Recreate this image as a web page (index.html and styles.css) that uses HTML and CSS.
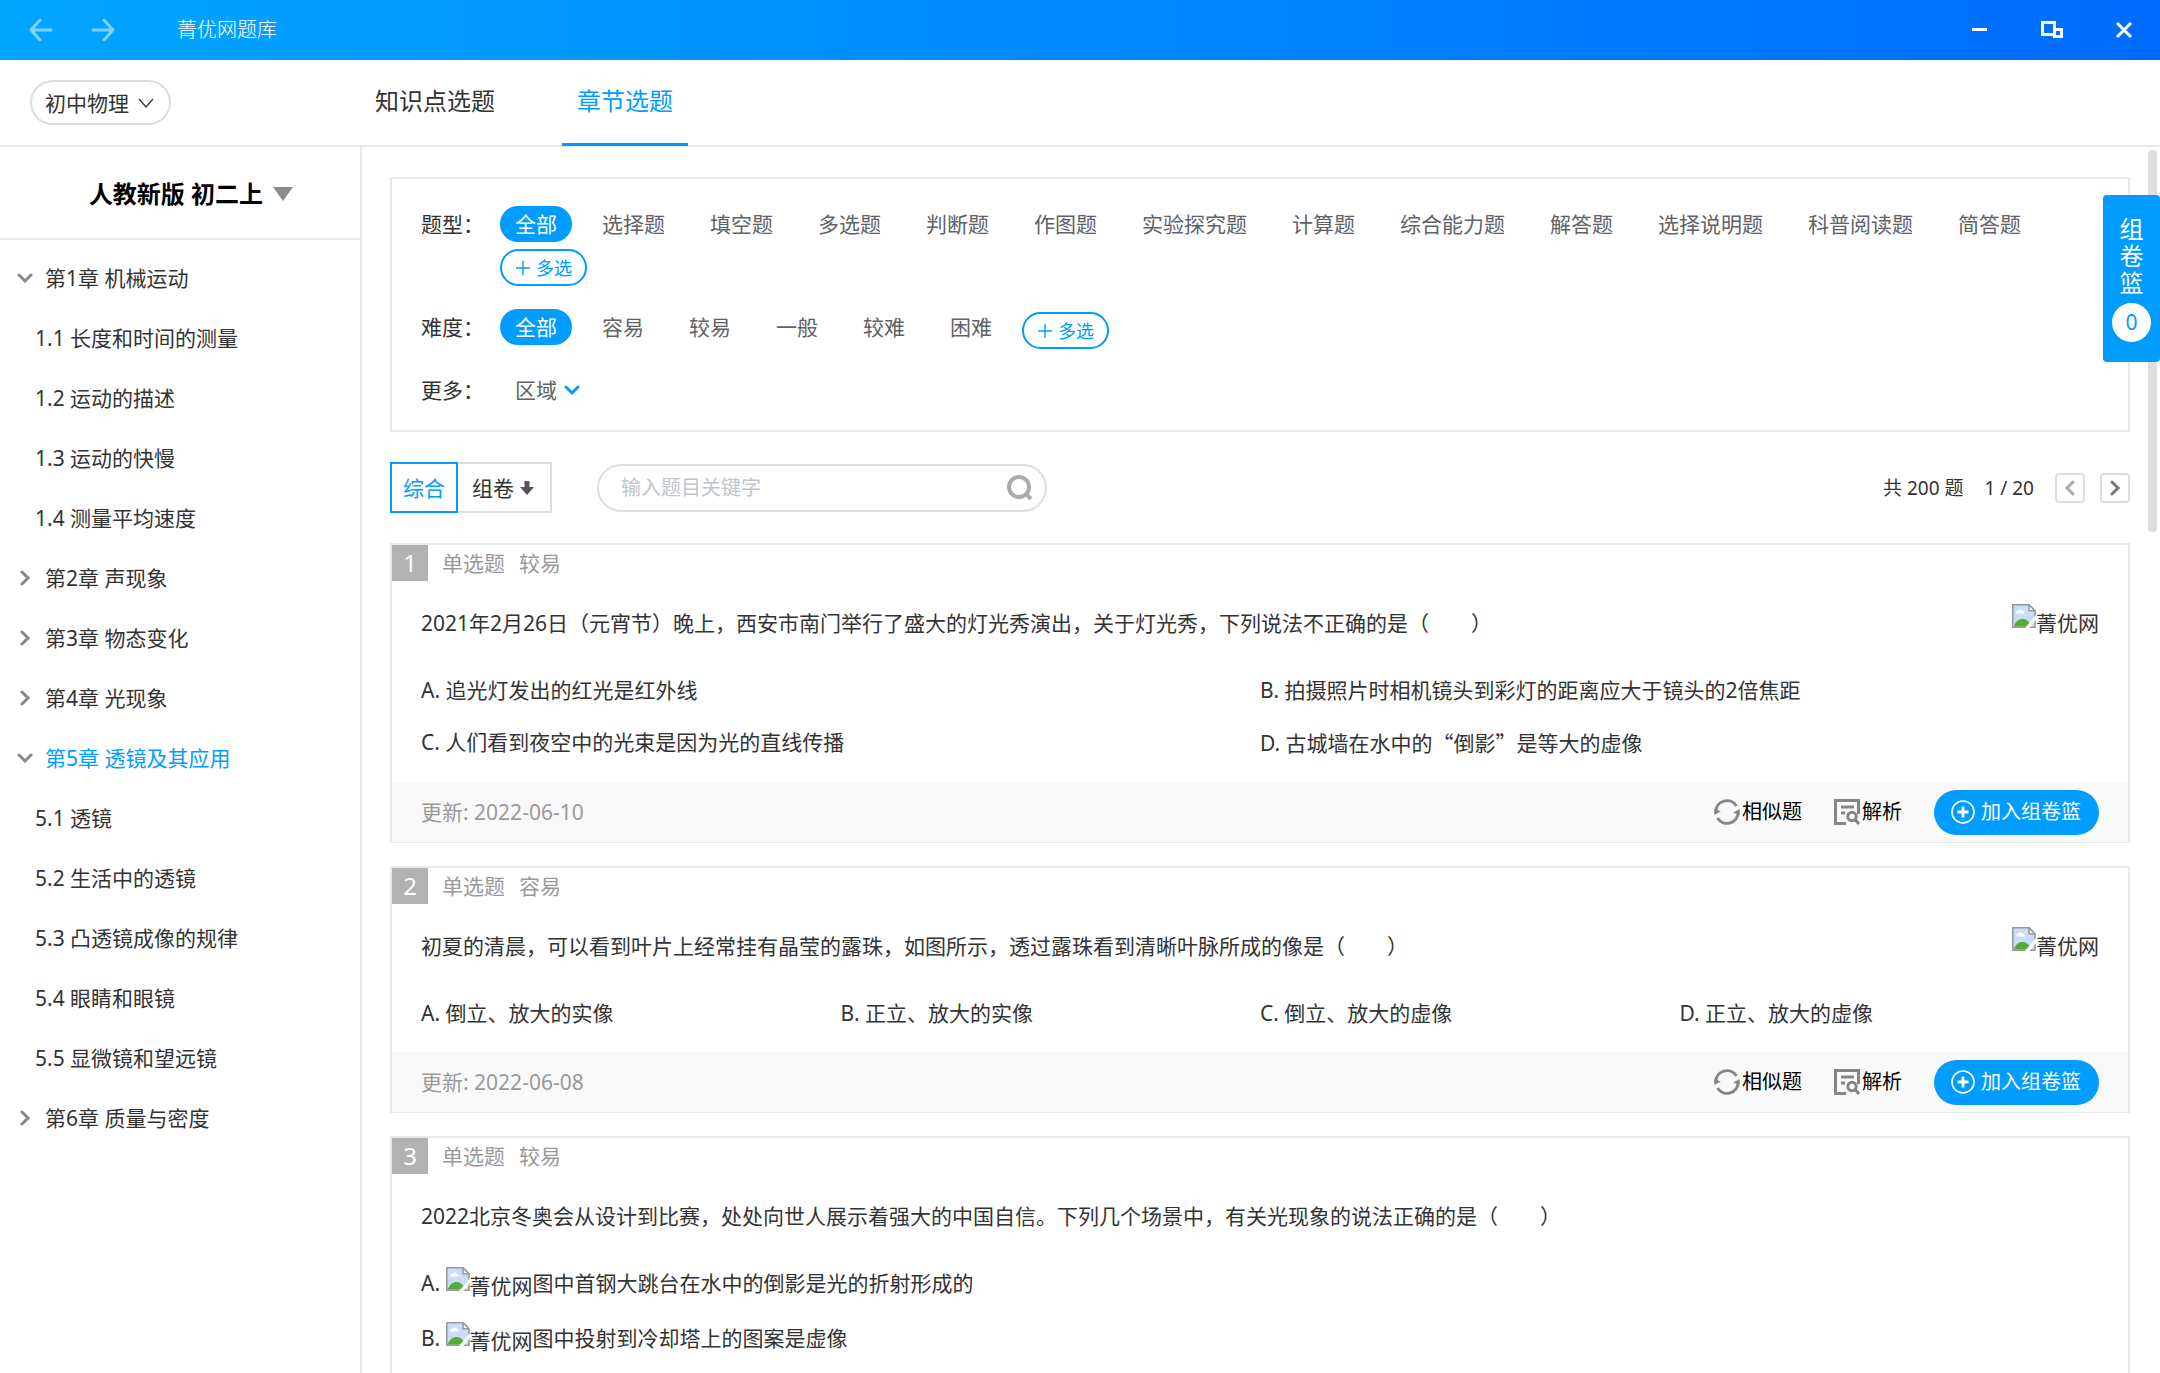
FILE: index.html
```
<!DOCTYPE html>
<html lang="zh-CN">
<head>
  <meta charset="UTF-8" />
  <meta name="viewport" content="width=device-width, initial-scale=1.0"/>
  <title>菁优网题库</title>
  <link rel="stylesheet" href="styles.css">
</head>
<body>
  <!-- shared icons -->
  <svg class="sprite" aria-hidden="true">
    <symbol id="i-down" viewBox="0 0 16 16"><path d="M2 5l6 6 6-6" fill="none" stroke="currentColor" stroke-width="3" stroke-linecap="round"/></symbol>
    <symbol id="i-right" viewBox="0 0 16 16"><path d="M5 2l6 6-6 6" fill="none" stroke="currentColor" stroke-width="3" stroke-linecap="round"/></symbol>
    <symbol id="i-left" viewBox="0 0 16 16"><path d="M11 2L5 8l6 6" fill="none" stroke="currentColor" stroke-width="3" stroke-linecap="round"/></symbol>
    <symbol id="i-plus" viewBox="0 0 16 16"><path d="M8 1v14M1 8h14" fill="none" stroke="currentColor" stroke-width="1.4"/></symbol>
    <symbol id="i-similar" viewBox="0 0 26 26">
      <path d="M1.800 13A11.200 11.200 0 0 1 22.500 7M24.200 13A11.200 11.200 0 0 1 3.500 19" fill="none" stroke="currentColor" stroke-width="3"/>
      <path d="M.3 16V10l6.500 2.500zM25.700 10v6l-6.500-2.500z" fill="currentColor"/>
    </symbol>
    <symbol id="i-analysis" viewBox="0 0 26 26">
      <path d="M12 24.500H1.500v-23h23V15M7 8h13M7 14h4" fill="none" stroke="currentColor" stroke-width="3"/>
      <circle cx="18" cy="17.500" r="4.200" fill="none" stroke="currentColor" stroke-width="3"/>
      <path d="M21 20.500l4 4.500" stroke="currentColor" stroke-width="3"/>
    </symbol>
    <symbol id="i-add" viewBox="0 0 24 24">
      <circle cx="12" cy="12" r="11" fill="none" stroke="currentColor" stroke-width="1.600"/>
      <path d="M12 6.500v11M6.500 12h11" stroke="currentColor" stroke-width="2.800"/>
    </symbol>
    <symbol id="i-broken" viewBox="0 0 24 24">
      <path d="M.8.8H17l6 6v16.400H.8z" fill="#c9dcf8" stroke="#9a9a9a" stroke-width="1.600"/>
      <path d="M4 9.500a2.500 2.500 0 0 1 2.500-3 2.800 2.800 0 0 1 4.500.5 1.800 1.800 0 0 1 1.500 2.500z" fill="#fff"/>
      <path d="M1.600 22.400c2-5 5.500-7.400 8.600-7.400 4 0 7.500 2.600 9 7.400z" fill="#55ac35"/>
      <path d="M17 .8v6h6z" fill="#fff" stroke="#9a9a9a" stroke-width="1.600"/>
      <path d="M24 11v5L17.500 24H13z" fill="#fff"/>
    </symbol>
  </svg>

  <header class="titlebar">
    <button class="nav-btn" aria-label="后退"><svg viewBox="0 0 24 22"><path d="M22 11H2M11 1L2 11l9 10"/></svg></button>
    <button class="nav-btn" aria-label="前进"><svg viewBox="0 0 24 22"><path d="M2 11h20M13 1l9 10-9 10"/></svg></button>
    <span class="app-name">菁优网题库</span>
    <div class="win-btns">
      <button aria-label="最小化"><svg viewBox="0 0 24 24"><path d="M4 11.500h15"/></svg></button>
      <button aria-label="还原"><svg viewBox="0 0 24 24"><path d="M2.500 4.500h12v12h-12zM14.500 11.500h7v7h-7z"/></svg></button>
      <button aria-label="关闭"><svg viewBox="0 0 24 24"><path d="M5 5l14 14M19 5L5 19"/></svg></button>
    </div>
  </header>

  <div class="topbar">
    <div class="subject-wrap">
      <button class="subject">初中物理<svg viewBox="0 0 16 12"><path d="M1 2l7 8 7-8" fill="none" stroke="currentColor" stroke-width="1.300"/></svg></button>
    </div>
    <nav class="tabs">
      <a href="#">知识点选题</a>
      <a href="#" class="active">章节选题</a>
    </nav>
  </div>

  <div class="layout">
    <aside class="sidebar">
      <button class="book">人教新版 初二上<svg viewBox="0 0 20 14"><path d="M0 0h20L10 14z" fill="#8c8c8c"/></svg></button>
      <ul class="tree">
        <li><a href="#" class="chapter"><svg><use href="#i-down"/></svg>第1章 机械运动</a>
          <ul>
            <li><a href="#">1.1 长度和时间的测量</a></li>
            <li><a href="#">1.2 运动的描述</a></li>
            <li><a href="#">1.3 运动的快慢</a></li>
            <li><a href="#">1.4 测量平均速度</a></li>
          </ul>
        </li>
        <li><a href="#" class="chapter"><svg><use href="#i-right"/></svg>第2章 声现象</a></li>
        <li><a href="#" class="chapter"><svg><use href="#i-right"/></svg>第3章 物态变化</a></li>
        <li><a href="#" class="chapter"><svg><use href="#i-right"/></svg>第4章 光现象</a></li>
        <li><a href="#" class="chapter current"><svg><use href="#i-down"/></svg>第5章 透镜及其应用</a>
          <ul>
            <li><a href="#">5.1 透镜</a></li>
            <li><a href="#">5.2 生活中的透镜</a></li>
            <li><a href="#">5.3 凸透镜成像的规律</a></li>
            <li><a href="#">5.4 眼睛和眼镜</a></li>
            <li><a href="#">5.5 显微镜和望远镜</a></li>
          </ul>
        </li>
        <li><a href="#" class="chapter"><svg><use href="#i-right"/></svg>第6章 质量与密度</a></li>
      </ul>
    </aside>

    <main class="content">
      <section class="filters">
        <div class="filter-row">
          <span class="filter-label">题型：</span>
          <div class="filter-items">
            <button class="item on">全部</button>
            <button class="item">选择题</button>
            <button class="item">填空题</button>
            <button class="item">多选题</button>
            <button class="item">判断题</button>
            <button class="item">作图题</button>
            <button class="item">实验探究题</button>
            <button class="item">计算题</button>
            <button class="item">综合能力题</button>
            <button class="item">解答题</button>
            <button class="item">选择说明题</button>
            <button class="item">科普阅读题</button>
            <button class="item">简答题</button>
            <button class="multi"><svg><use href="#i-plus"/></svg>多选</button>
          </div>
        </div>
        <div class="filter-row">
          <span class="filter-label">难度：</span>
          <div class="filter-items">
            <button class="item on">全部</button>
            <button class="item">容易</button>
            <button class="item">较易</button>
            <button class="item">一般</button>
            <button class="item">较难</button>
            <button class="item">困难</button>
            <button class="multi"><svg><use href="#i-plus"/></svg>多选</button>
          </div>
        </div>
        <div class="filter-row">
          <span class="filter-label">更多：</span>
          <div class="filter-items">
            <button class="item area">区域<svg><use href="#i-down"/></svg></button>
          </div>
        </div>
      </section>

      <div class="toolbar">
        <div class="sort">
          <button class="on">综合</button>
          <button>组卷<svg viewBox="0 0 14 14"><path d="M4.500 0h5v6H14l-7 8-7-8h4.500z" fill="currentColor"/></svg></button>
        </div>
        <label class="search">
          <input type="text" placeholder="输入题目关键字" aria-label="搜索题目">
          <svg viewBox="0 0 26 26"><circle cx="12" cy="12" r="10"/><path d="M19 19l5 5"/></svg>
        </label>
        <div class="pager">
          <span>共 200 题</span>
          <span>1 / 20</span>
          <button aria-label="上一页" disabled><svg><use href="#i-left"/></svg></button>
          <button aria-label="下一页"><svg><use href="#i-right"/></svg></button>
        </div>
      </div>

      <article class="card">
        <div class="card-head"><span class="num">1</span><span>单选题</span><span>较易</span></div>
        <div class="card-body">
          <div class="question">
            <p>2021年2月26日（元宵节）晚上，西安市南门举行了盛大的灯光秀演出，关于灯光秀，下列说法不正确的是（　　）</p>
            <span class="broken"><svg><use href="#i-broken"/></svg><span>菁优网</span></span>
          </div>
          <ul class="options cols-2">
            <li>A. 追光灯发出的红光是红外线</li>
            <li>B. 拍摄照片时相机镜头到彩灯的距离应大于镜头的2倍焦距</li>
            <li>C. 人们看到夜空中的光束是因为光的直线传播</li>
            <li>D. 古城墙在水中的<span class="quoted">“倒影”</span>是等大的虚像</li>
          </ul>
        </div>
        <footer class="card-foot">
          <span class="date">更新: 2022-06-10</span>
          <a href="#"><svg><use href="#i-similar"/></svg>相似题</a>
          <a href="#"><svg><use href="#i-analysis"/></svg>解析</a>
          <button class="add"><svg><use href="#i-add"/></svg>加入组卷篮</button>
        </footer>
      </article>

      <article class="card">
        <div class="card-head"><span class="num">2</span><span>单选题</span><span>容易</span></div>
        <div class="card-body">
          <div class="question">
            <p>初夏的清晨，可以看到叶片上经常挂有晶莹的露珠，如图所示，透过露珠看到清晰叶脉所成的像是（　　）</p>
            <span class="broken"><svg><use href="#i-broken"/></svg><span>菁优网</span></span>
          </div>
          <ul class="options cols-4">
            <li>A. 倒立、放大的实像</li>
            <li>B. 正立、放大的实像</li>
            <li>C. 倒立、放大的虚像</li>
            <li>D. 正立、放大的虚像</li>
          </ul>
        </div>
        <footer class="card-foot">
          <span class="date">更新: 2022-06-08</span>
          <a href="#"><svg><use href="#i-similar"/></svg>相似题</a>
          <a href="#"><svg><use href="#i-analysis"/></svg>解析</a>
          <button class="add"><svg><use href="#i-add"/></svg>加入组卷篮</button>
        </footer>
      </article>

      <article class="card">
        <div class="card-head"><span class="num">3</span><span>单选题</span><span>较易</span></div>
        <div class="card-body">
          <div class="question">
            <p>2022北京冬奥会从设计到比赛，处处向世人展示着强大的中国自信。下列几个场景中，有关光现象的说法正确的是（　　）</p>
          </div>
          <ul class="options">
            <li>A. <span class="broken"><svg><use href="#i-broken"/></svg><span>菁优网</span></span>图中首钢大跳台在水中的倒影是光的折射形成的</li>
            <li>B. <span class="broken"><svg><use href="#i-broken"/></svg><span>菁优网</span></span>图中投射到冷却塔上的图案是虚像</li>
          </ul>
        </div>
      </article>
    </main>
    <div class="scroll-thumb"></div>
    <button class="basket">组卷篮<span>0</span></button>
  </div>
</body>
</html>
```
FILE: styles.css
```
* {
  box-sizing: border-box;
}

body {
  margin: 0;
  height: 100vh;
  display: flex;
  flex-direction: column;
  overflow: hidden;
  background: #fff;
  color: #333;
  font-family: "Noto Sans", "Noto Sans CJK SC", sans-serif;
  font-size: 21px;
  line-height: 32px;
}

button {
  font: inherit;
  color: inherit;
  background: none;
  border: none;
  padding: 0;
  cursor: pointer;
}

a {
  color: inherit;
  text-decoration: none;
}

ul {
  list-style: none;
  margin: 0;
  padding: 0;
}

p {
  margin: 0;
}

svg {
  flex: none;
  width: 16px;
  height: 16px;
}

.sprite {
  position: absolute;
  width: 0;
  height: 0;
}

/* title bar */
.titlebar {
  flex: none;
  display: flex;
  align-items: center;
  height: 60px;
  padding: 0 24px 0 29px;
  background: linear-gradient(90deg, #01a6ff, #006cff);
  color: #fff;
  font-size: 20px;
  font-weight: 300;
}

.nav-btn {
  display: flex;
  margin-right: 38px;
}

.nav-btn svg {
  width: 24px;
  height: 22px;
  fill: none;
  stroke: #fff;
  stroke-width: 3;
  stroke-linecap: round;
  opacity: .5;
}

.app-name {
  margin-left: 24px;
}

.win-btns {
  display: flex;
  gap: 48px;
  margin-left: auto;
}

.win-btns button {
  display: flex;
}

.win-btns svg {
  width: 24px;
  height: 24px;
  fill: none;
  stroke: #fff;
  stroke-width: 3;
}

/* subject and tabs */
.topbar {
  flex: none;
  display: flex;
  height: 87px;
  border-bottom: 2px solid #e9e9e9;
}

.subject-wrap {
  width: 360px;
  padding: 20px 30px;
}

.subject {
  display: flex;
  align-items: center;
  gap: 9px;
  height: 45px;
  padding: 0 15px 0 13px;
  border: 2px solid #ddd;
  border-radius: 23px;
  line-height: 30px;
}

.tabs {
  display: flex;
  gap: 52px;
  font-size: 24px;
}

.tabs a {
  height: 86px;
  padding: 0 15px;
  line-height: 82px;
}

.tabs .active {
  color: #009dff;
  border-bottom: 3px solid #009dff;
}

.layout {
  position: relative;
  flex: 1;
  display: flex;
  min-height: 0;
}

/* chapter tree */
.sidebar {
  flex: none;
  width: 362px;
  border-right: 2px solid #e9e9e9;
}

.book {
  display: flex;
  align-items: center;
  justify-content: center;
  gap: 10px;
  width: 100%;
  height: 93px;
  padding: 2px 0 0 22px;
  border-bottom: 2px solid #e9e9e9;
  color: #000;
  font-size: 24px;
  font-weight: 700;
}

.book svg {
  width: 20px;
  height: 14px;
}

.tree {
  padding-top: 8px;
}

.tree a {
  display: flex;
  align-items: center;
  height: 60px;
  padding-left: 35px;
}

.tree .chapter {
  gap: 12px;
  padding-left: 17px;
}

.tree .chapter svg {
  color: #888;
}

.tree .current {
  color: #009dff;
}

/* right side */
.content {
  flex: 1;
  min-width: 0;
  padding: 30px 30px 0 28px;
  overflow: hidden;
}

.filters {
  padding: 27px 29px 22px;
  border: 2px solid #e9e9e9;
}

.filter-row {
  display: flex;
  margin-bottom: 23px;
}

.filter-row:last-child {
  margin-bottom: 0;
}

.filter-label {
  flex: none;
  width: 79px;
  line-height: 36px;
}

.filter-items {
  display: flex;
  flex-wrap: wrap;
  gap: 4px 15px;
}

.item {
  height: 36px;
  padding: 0 15px;
  border-radius: 18px;
  color: #606266;
}

.item.on {
  background: #009dff;
  color: #fff;
}

.item.area {
  display: flex;
  align-items: center;
  gap: 7px;
}

.area svg {
  color: #009dff;
}

.multi {
  display: flex;
  align-items: center;
  gap: 5px;
  height: 37px;
  margin-top: 3px;
  padding: 0 13px;
  border: 2px solid #009dff;
  border-radius: 19px;
  color: #009dff;
  font-size: 18px;
}

.toolbar {
  display: flex;
  align-items: center;
  margin: 30px 0;
}

.sort {
  display: flex;
}

.sort button {
  display: flex;
  align-items: center;
  gap: 6px;
  height: 51px;
  padding: 0 16px 0 14px;
  border: 2px solid #ddd;
  border-left: none;
}

.sort svg {
  width: 14px;
  height: 14px;
  color: #555;
}

.sort .on {
  padding: 0 11px;
  border: 2px solid #009dff;
  color: #009dff;
}

.search {
  display: flex;
  align-items: center;
  width: 450px;
  height: 48px;
  margin-left: 45px;
  padding: 0 12px 0 22px;
  border: 2px solid #dcdfe6;
  border-radius: 24px;
}

.search input {
  flex: 1;
  min-width: 0;
  padding: 0;
  border: none;
  outline: none;
  font: inherit;
  font-size: 20px;
}

.search input::placeholder {
  color: #c0c4cc;
}

.search svg {
  width: 26px;
  height: 26px;
  fill: none;
  stroke: #aaa;
  stroke-width: 4;
}

.pager {
  display: flex;
  align-items: center;
  gap: 15px;
  margin-left: auto;
  font-size: 19px;
}

.pager span {
  margin-right: 6px;
}

.pager button {
  display: flex;
  align-items: center;
  justify-content: center;
  width: 30px;
  height: 30px;
  border: 2px solid #ddd;
  border-radius: 4px;
  color: #777;
}

.pager button:disabled {
  color: #aaa;
}

/* question cards */
.card {
  margin-bottom: 23px;
  border: 2px solid #e9e9e9;
  border-bottom-width: 1px;
}

.card-head {
  display: flex;
  gap: 14px;
  color: #999;
  line-height: 36px;
}

.num {
  width: 36px;
  background: #b2b2b2;
  color: #fff;
  font-size: 24px;
  text-align: center;
}

.card-body {
  padding: 26px 29px 13px;
}

.question {
  display: flex;
  justify-content: space-between;
}

.options {
  display: grid;
  margin-top: 25px;
}

.options li {
  padding: 10px 0;
}

.cols-2 {
  grid-template-columns: repeat(2, 1fr);
}

.cols-4 {
  grid-template-columns: repeat(4, 1fr);
}

.quoted {
  font-family: "Noto Sans CJK SC", sans-serif;
}

/* picture that failed to load, with its alt text */
.broken {
  display: inline-flex;
  vertical-align: top;
}

.broken svg {
  width: 24px;
  height: 24px;
  margin-top: -3px;
}

.options .broken {
  margin-top: 3px;
}

.card-foot {
  display: flex;
  align-items: center;
  height: 60px;
  padding: 0 29px;
  background: #f9f9f9;
  color: #000;
  font-size: 20px;
}

.date {
  margin-right: auto;
  color: #999;
  font-size: 21px;
}

.card-foot a {
  display: flex;
  align-items: center;
  gap: 2px;
  margin-right: 32px;
}

.card-foot a svg {
  width: 26px;
  height: 26px;
  color: #858585;
}

.add {
  display: flex;
  align-items: center;
  gap: 6px;
  height: 45px;
  padding: 0 18px 0 17px;
  border-radius: 23px;
  background: #009dff;
  color: #fff;
}

.add svg {
  width: 24px;
  height: 24px;
}

/* floating parts */
.scroll-thumb {
  position: absolute;
  top: 3px;
  right: 3px;
  width: 9px;
  height: 382px;
  border-radius: 4px;
  background: #dddee0;
}

.basket {
  position: absolute;
  top: 48px;
  right: 0;
  display: flex;
  flex-direction: column;
  align-items: center;
  width: 57px;
  height: 167px;
  padding: 20px 16px 0;
  border-radius: 4px;
  background: #009dff;
  color: #fff;
  font-size: 24px;
  line-height: 27px;
}

.basket span {
  width: 39px;
  height: 39px;
  margin-top: 7px;
  border-radius: 50%;
  background: #fff;
  color: #009dff;
  font-size: 21px;
  line-height: 39px;
}
```
